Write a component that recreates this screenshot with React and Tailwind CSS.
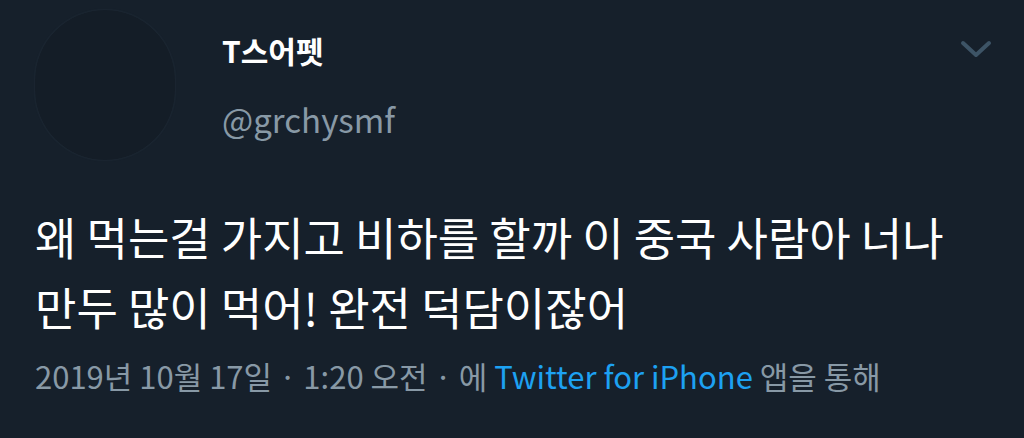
import React from 'react';

const font = { fontFamily: '"Noto Sans CJK KR", "Noto Sans", sans-serif' };

const Chevron = () => (
  <svg width="32" height="20" viewBox="0 0 32 20" className="text-[#3d5466]">
    <path d="M3 3 L16 15 L29 3" fill="none" stroke="currentColor" strokeWidth="4" strokeLinecap="round" strokeLinejoin="round" />
  </svg>
);

export default function App() {
  return (
    <div className="w-[1024px] h-[438px] bg-[#16202b] overflow-hidden" style={font}>
      <div className="flex items-start h-[175px]">
        <div className="ml-[35px] mt-[10px] w-[140px] h-[150px] rounded-full bg-[#141d27] shadow-[0_0_2px_rgba(80,100,120,0.3)]" />
        <div className="ml-[47px] mt-[28px] flex flex-col">
          <span className="text-[30px] font-bold text-white leading-[44px]">T스어펫</span>
          <span className="mt-[25px] text-[33px] text-[#8899a6] leading-[44px]">@grchysmf</span>
        </div>
        <div className="ml-auto mr-[32px] mt-[40px]">
          <Chevron />
        </div>
      </div>
      <div className="px-[35px] pt-[27px] text-[45px] leading-[70px] text-white whitespace-nowrap">
        <p>왜 먹는걸 가지고 비하를 할까 이 중국 사람아 너나</p>
        <p>만두 많이 먹어! 완전 덕담이잖어</p>
      </div>
      <div className="px-[35px] mt-[14px] text-[31px] leading-[40px] text-[#8899a6] whitespace-nowrap">
        2019년 10월 17일 · 1:20 오전 · 에 <span className="text-[#1da1f2]">Twitter for iPhone</span> 앱을 통해
      </div>
    </div>
  );
}
